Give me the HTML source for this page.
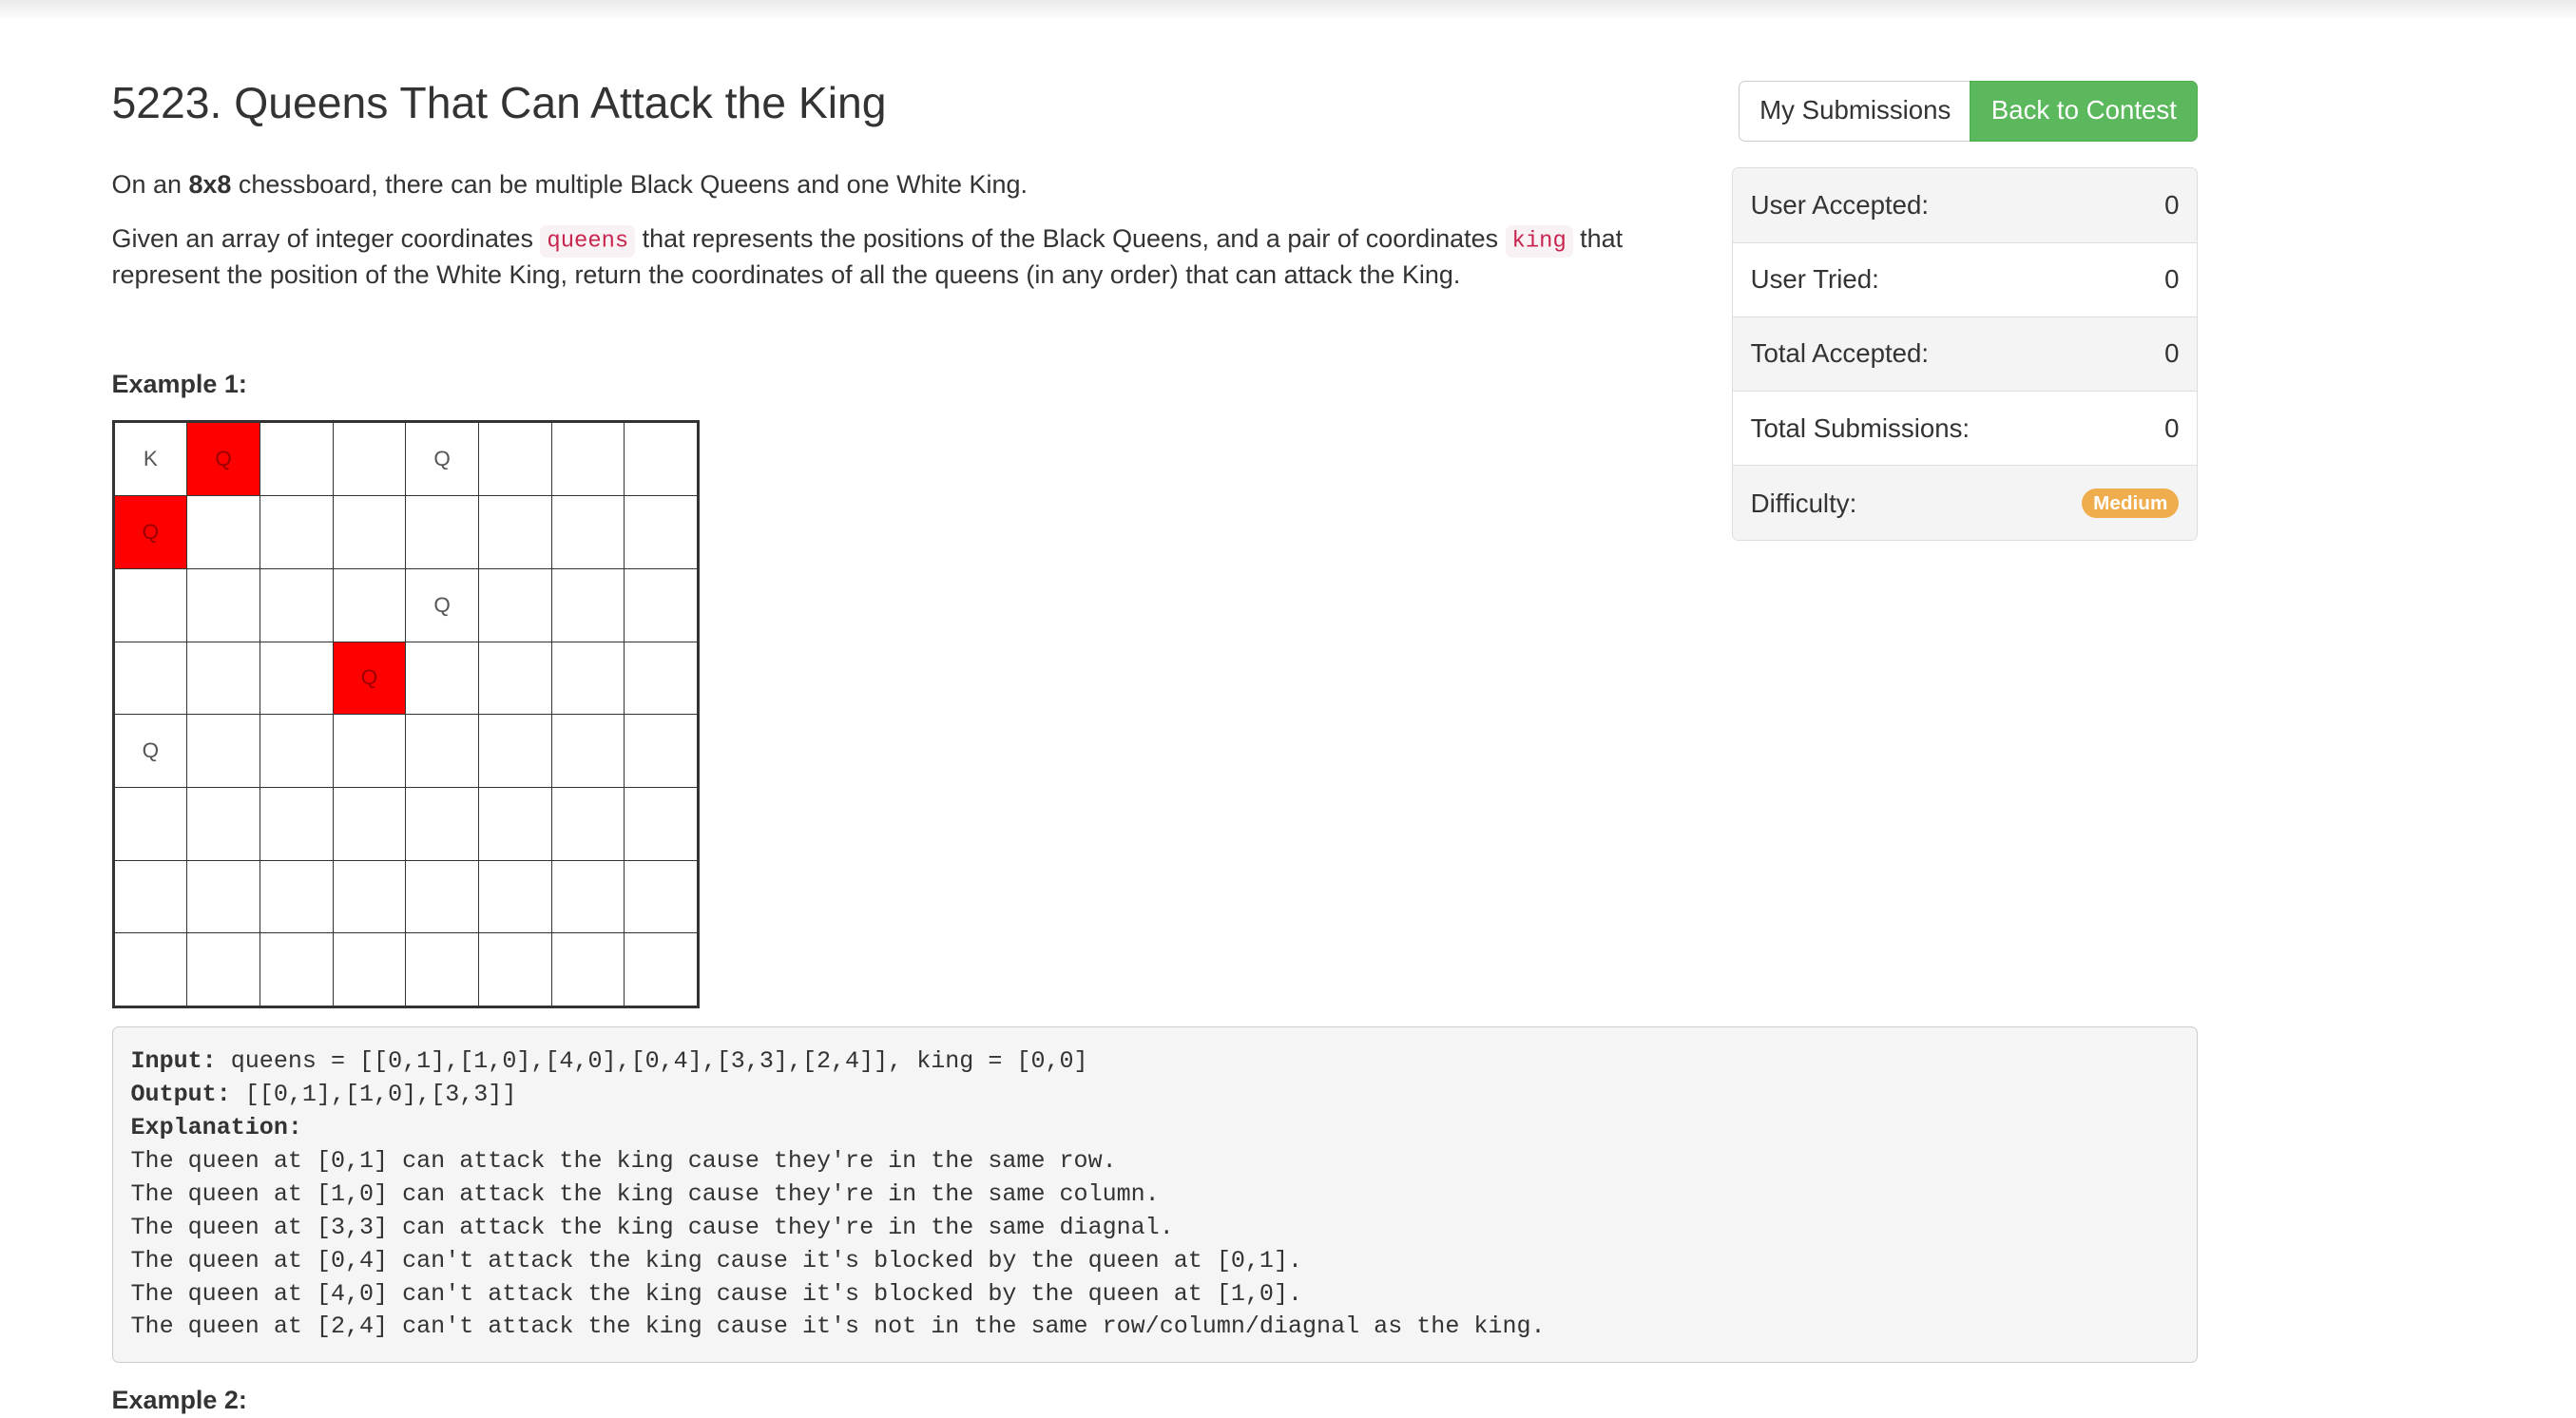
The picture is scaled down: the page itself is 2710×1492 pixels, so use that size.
<!DOCTYPE html>
<html><head><meta charset="utf-8"><style>
html,body{margin:0;padding:0;background:#fff}
body{width:1568px;height:863px;overflow:hidden;zoom:1.72832;position:relative;font-family:"Liberation Sans",Arial,sans-serif;color:#333}
.topsh{position:absolute;left:0;top:0;width:1568px;height:12px;background:linear-gradient(#e9e9e9,#fff)}
.a{position:absolute;white-space:nowrap}
h1{position:absolute;left:68px;top:47px;margin:0;font-size:26.8px;font-weight:normal;color:#333}
.p{font-size:15.6px;line-height:22px}
code{font-family:"Liberation Mono",monospace;font-size:13.8px;color:#c7254e;background:#f9f2f4;border-radius:4px;padding:2px 4px}
table{position:absolute;left:68px;top:256px;border-collapse:collapse;border:2px solid #333}
td{width:43.8px;height:43.8px;border:1px solid #333;padding:0;text-align:center;font-size:13px;color:#555}
td.r{background:#f00;color:#900}
pre{position:absolute;left:68px;top:625px;width:1270px;height:205px;margin:0;box-sizing:border-box;background:#f5f5f5;border:1px solid #ccc;border-radius:4px;padding:11px 11px;font-family:"Liberation Mono",monospace;font-size:14.5px;line-height:20.2px;color:#333}
.btn{position:absolute;top:49px;height:37px;box-sizing:border-box;font-size:16px;line-height:35px;text-align:center}
.panel{position:absolute;left:1054px;top:102px;width:284px;height:227px;border:1px solid #ddd;border-radius:4px;box-sizing:border-box;overflow:hidden}
.row{height:45.3px;box-sizing:border-box;border-bottom:1px solid #ddd;padding:0 11px;display:flex;justify-content:space-between;align-items:center;font-size:16px}
.row:nth-child(odd){background:#f4f4f4}
.row:last-child{border-bottom:none}
.badge{background:#f0ad4e;color:#fff;font-weight:bold;font-size:12px;border-radius:10px;padding:2px 7px}
</style></head><body>
<div class="topsh"></div>
<h1>5223. Queens That Can Attack the King</h1>
<div class="a p" style="left:68px;top:101px">On an <b>8x8</b> chessboard, there can be multiple Black Queens and one White King.</div>
<div class="a p" style="left:68px;top:134px">Given an array of integer coordinates <code>queens</code> that represents the positions of the Black Queens, and a pair of coordinates <code>king</code> that</div>
<div class="a p" style="left:68px;top:156px">represent the position of the White King, return the coordinates of all the queens (in any order) that can attack the King.</div>
<div class="a p" style="left:68px;top:223px;font-weight:bold">Example 1:</div>
<table>
<tr><td>K</td><td class="r">Q</td><td></td><td></td><td>Q</td><td></td><td></td><td></td></tr>
<tr><td class="r">Q</td><td></td><td></td><td></td><td></td><td></td><td></td><td></td></tr>
<tr><td></td><td></td><td></td><td></td><td>Q</td><td></td><td></td><td></td></tr>
<tr><td></td><td></td><td></td><td class="r">Q</td><td></td><td></td><td></td><td></td></tr>
<tr><td>Q</td><td></td><td></td><td></td><td></td><td></td><td></td><td></td></tr>
<tr><td></td><td></td><td></td><td></td><td></td><td></td><td></td><td></td></tr>
<tr><td></td><td></td><td></td><td></td><td></td><td></td><td></td><td></td></tr>
<tr><td></td><td></td><td></td><td></td><td></td><td></td><td></td><td></td></tr>
</table>
<pre><b>Input:</b> queens = [[0,1],[1,0],[4,0],[0,4],[3,3],[2,4]], king = [0,0]
<b>Output:</b> [[0,1],[1,0],[3,3]]
<b>Explanation:</b>
The queen at [0,1] can attack the king cause they're in the same row.
The queen at [1,0] can attack the king cause they're in the same column.
The queen at [3,3] can attack the king cause they're in the same diagnal.
The queen at [0,4] can't attack the king cause it's blocked by the queen at [0,1].
The queen at [4,0] can't attack the king cause it's blocked by the queen at [1,0].
The queen at [2,4] can't attack the king cause it's not in the same row/column/diagnal as the king.</pre>
<div class="a p" style="left:68px;top:841px;font-weight:bold">Example 2:</div>
<div class="btn" style="left:1058px;width:142px;border:1px solid #ccc;border-right:none;border-radius:4px 0 0 4px;color:#333;background:#fff">My Submissions</div>
<div class="btn" style="left:1199px;width:139px;border:1px solid #4cae4c;border-radius:0 4px 4px 0;color:#fff;background:#5cb85c">Back to Contest</div>
<div class="panel">
<div class="row"><span>User Accepted:</span><span>0</span></div>
<div class="row"><span>User Tried:</span><span>0</span></div>
<div class="row"><span>Total Accepted:</span><span>0</span></div>
<div class="row"><span>Total Submissions:</span><span>0</span></div>
<div class="row"><span>Difficulty:</span><span class="badge">Medium</span></div>
</div>
</body></html>
